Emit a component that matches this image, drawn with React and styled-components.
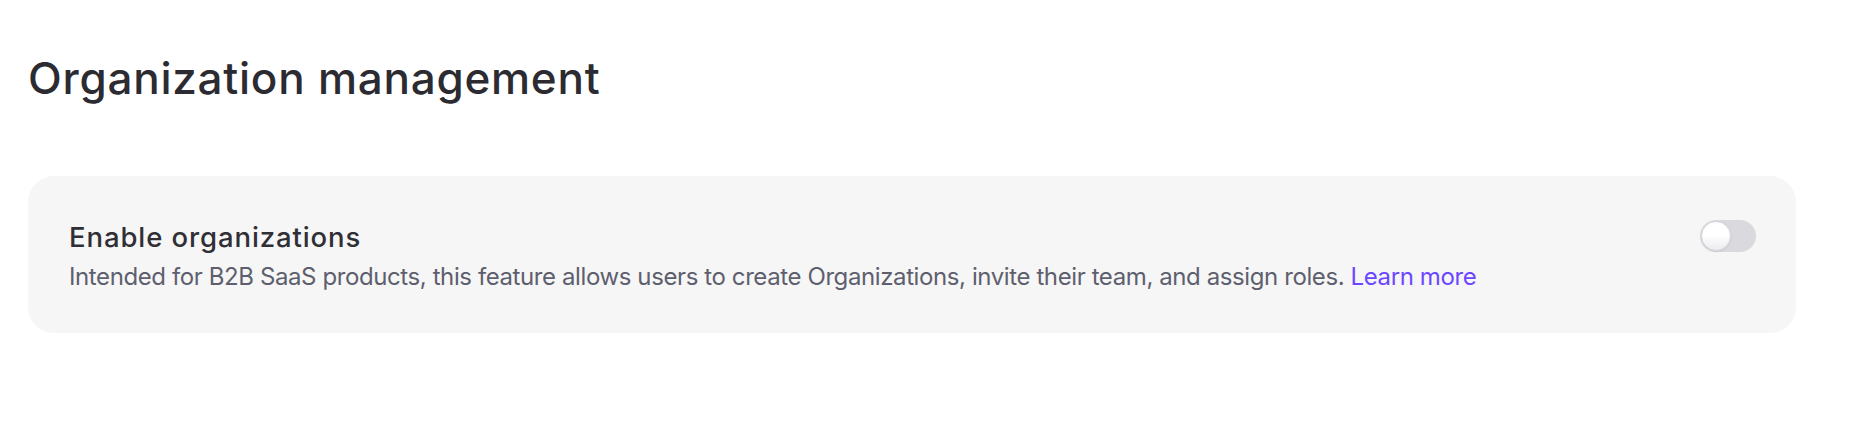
import React, { useState } from "react"
import styled, { createGlobalStyle } from "styled-components"

const GlobalStyle = createGlobalStyle`
  html, body {
    margin: 0;
    padding: 0;
    background: #ffffff;
    font-family: Inter, "Noto Sans", sans-serif;
    -webkit-font-smoothing: antialiased;
  }
`

const Page = styled.main`
  padding: 52px 70px 0 28px;
`

const Heading = styled.h1`
  margin: 0 0 71px 0;
  font-size: 44px;
  line-height: 53px;
  font-weight: 500;
  letter-spacing: 0.75px;
  color: #2b2b31;
`

const Card = styled.section`
  display: flex;
  align-items: flex-start;
  justify-content: space-between;
  gap: 40px;
  background: #f6f6f6;
  border-radius: 26px;
  padding: 43px 40px 38px 41px;
`

const Text = styled.div`
  display: flex;
  flex-direction: column;
  gap: 4px;
`

const Title = styled.h2`
  margin: 0;
  font-size: 27.5px;
  line-height: 36px;
  font-weight: 500;
  letter-spacing: 0.9px;
  color: #2f2f35;
`

const Description = styled.p`
  margin: 0;
  font-size: 24px;
  line-height: 36px;
  letter-spacing: -0.4px;
  color: #5e5f6e;
`

const Link = styled.a`
  color: #6c47ff;
  text-decoration: none;
`

const Switch = styled.button`
  flex: none;
  position: relative;
  width: 56px;
  height: 32px;
  margin-top: 1px;
  padding: 0;
  border: none;
  border-radius: 16px;
  background: ${props => (props.on ? "#6c47ff" : "#d9d9de")};
  cursor: pointer;
`

const Knob = styled.span`
  position: absolute;
  top: 1px;
  left: ${props => (props.on ? "25px" : "1px")};
  width: 30px;
  height: 30px;
  box-sizing: border-box;
  border-radius: 50%;
  border: 1px solid #d6d6db;
  background: linear-gradient(180deg, #ffffff 0%, #ffffff 45%, #ececef 100%);
  box-shadow: 0 1px 2px rgba(0, 0, 0, 0.08);
`

export default function App() {
  const [on, setOn] = useState(false)

  return (
    <Page>
      <GlobalStyle />
      <Heading>Organization management</Heading>
      <Card>
        <Text>
          <Title>Enable organizations</Title>
          <Description>
            Intended for B2B SaaS products, this feature allows users to create
            Organizations, invite their team, and assign roles.{" "}
            <Link href="#">Learn more</Link>
          </Description>
        </Text>
        <Switch on={on ? 1 : 0} onClick={() => setOn(!on)}>
          <Knob on={on ? 1 : 0} />
        </Switch>
      </Card>
    </Page>
  )
}
